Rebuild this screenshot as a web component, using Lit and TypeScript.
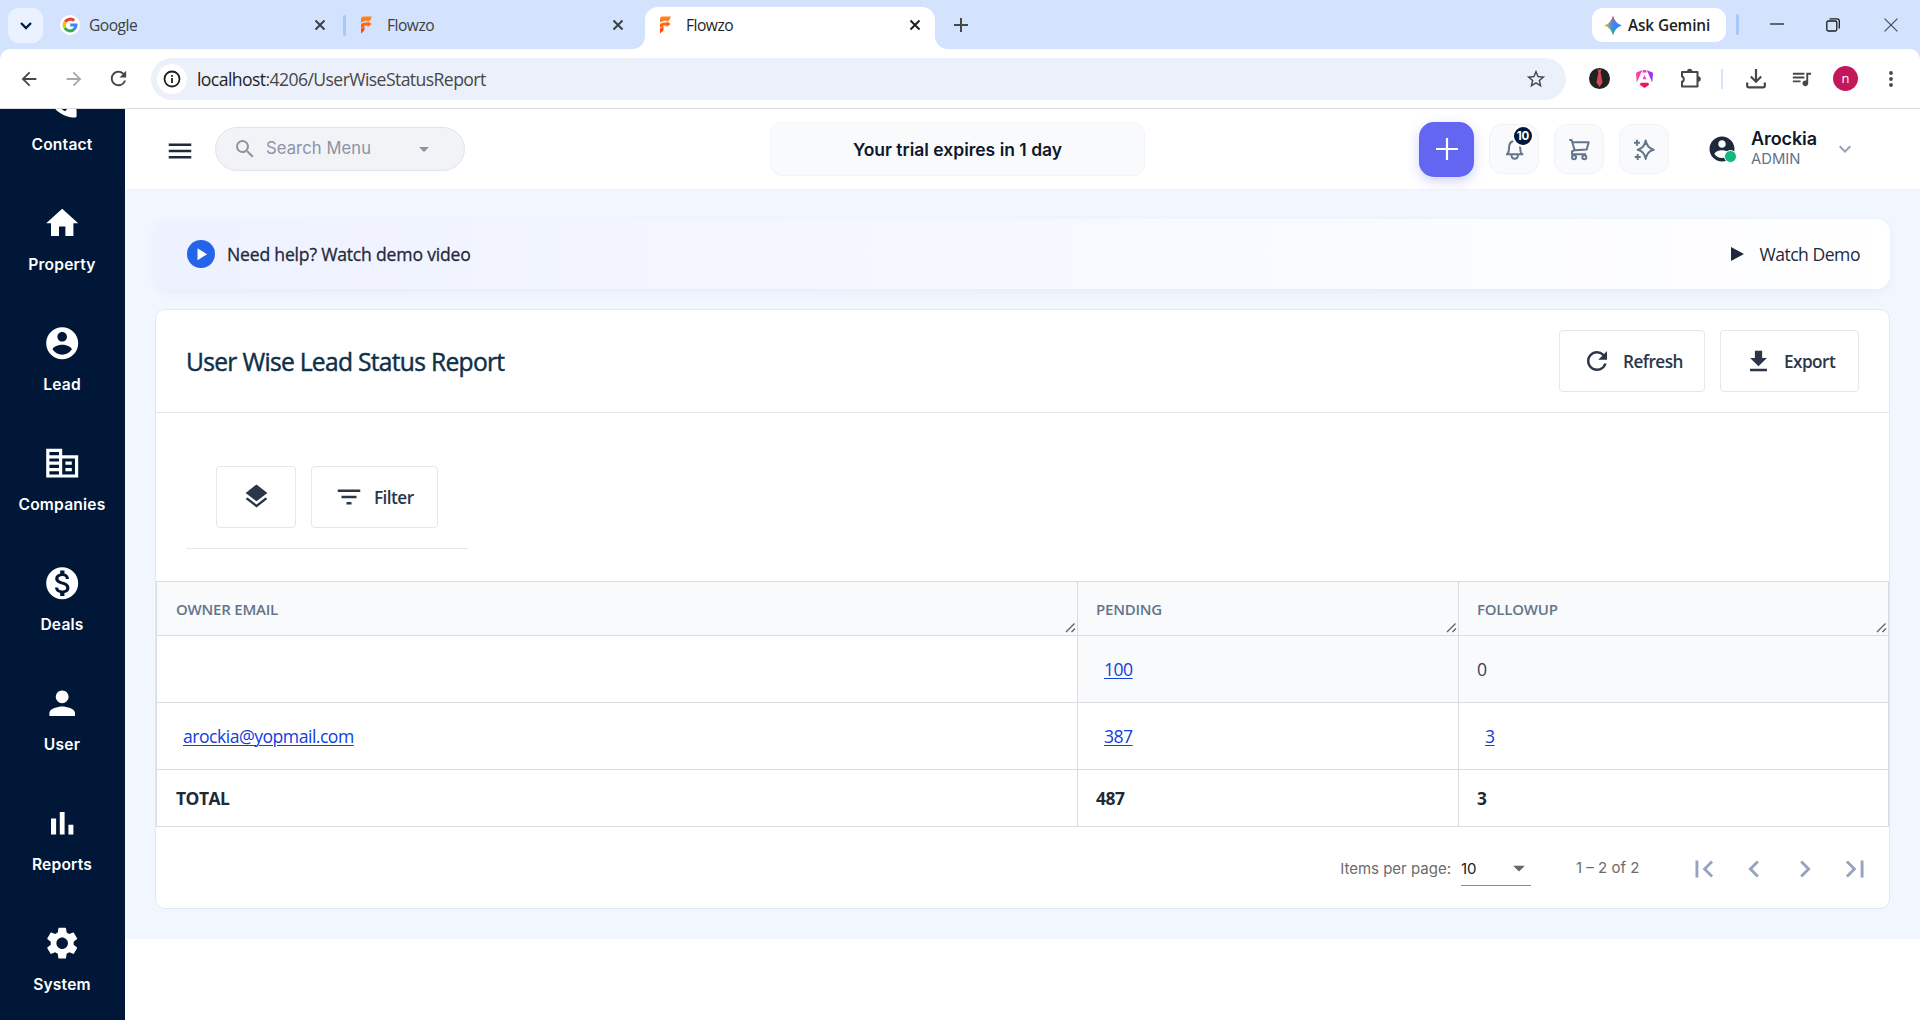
import { LitElement, html, svg, css, nothing } from "lit";
import { customElement, property } from "lit/decorators.js";
import { classMap } from "lit/directives/class-map.js";

const icons: Record<string, string> = {
  call: "M20.01 15.38c-1.23 0-2.42-.2-3.53-.56a.977.977 0 0 0-1.01.24l-1.57 1.97c-2.83-1.35-5.48-3.9-6.89-6.83l1.95-1.66c.27-.28.35-.67.24-1.02-.37-1.11-.56-2.3-.56-3.53 0-.54-.45-.99-.99-.99H4.19C3.65 3 3 3.24 3 3.99 3 13.28 10.73 21 20.01 21c.71 0 .99-.63.99-1.18v-3.45c0-.54-.45-.99-.99-.99z",
  home: "M10 20v-6h4v6h5v-8h3L12 3 2 12h3v8z",
  account: "M12 2C6.48 2 2 6.48 2 12s4.48 10 10 10 10-4.48 10-10S17.52 2 12 2zm0 3c1.66 0 3 1.34 3 3s-1.34 3-3 3-3-1.34-3-3 1.34-3 3-3zm0 14.2c-2.5 0-4.71-1.28-6-3.22.03-1.99 4-3.08 6-3.08 1.99 0 5.97 1.09 6 3.08-1.29 1.94-3.5 3.22-6 3.22z",
  business: "M12 7V3H2v18h20V7H12zm-2 12H4v-2h6v2zm0-4H4v-2h6v2zm0-4H4V9h6v2zm0-4H4V5h6v2zm10 12h-8V9h8v10zm-2-8h-4v2h4v-2zm0 4h-4v2h4v-2z",
  deals: "M12 2C6.48 2 2 6.48 2 12s4.48 10 10 10 10-4.48 10-10S17.52 2 12 2zm1.41 16.09V20h-2.67v-1.93c-1.71-.36-3.16-1.46-3.27-3.4h1.96c.1 1.05.82 1.87 2.65 1.87 1.96 0 2.4-.98 2.4-1.59 0-.83-.44-1.61-2.67-2.14-2.48-.6-4.18-1.62-4.18-3.67 0-1.72 1.39-2.84 3.11-3.21V4h2.67v1.95c1.86.45 2.79 1.86 2.85 3.39H14.3c-.05-1.11-.64-1.87-2.22-1.87-1.5 0-2.4.68-2.4 1.64 0 .84.65 1.39 2.67 1.91s4.18 1.39 4.18 3.91c-.01 1.83-1.38 2.83-3.12 3.16z",
  person: "M12 12c2.21 0 4-1.79 4-4s-1.79-4-4-4-4 1.79-4 4 1.79 4 4 4zm0 2c-2.67 0-8 1.34-8 4v2h16v-2c0-2.66-5.33-4-8-4z",
  chart: "M5 9h3.2v10H5zM10.5 5h3v14h-3zM15.9 13H19v6h-3.1z",
  gear: "M19.14 12.94c.04-.3.06-.61.06-.94 0-.32-.02-.64-.07-.94l2.03-1.58a.49.49 0 0 0 .12-.61l-1.92-3.32a.488.488 0 0 0-.59-.22l-2.39.96c-.5-.38-1.03-.7-1.62-.94l-.36-2.54a.484.484 0 0 0-.48-.41h-3.84c-.24 0-.43.17-.47.41l-.36 2.54c-.59.24-1.13.57-1.62.94l-2.39-.96c-.22-.08-.47 0-.59.22L2.74 8.87c-.12.21-.08.47.12.61l2.03 1.58c-.05.3-.09.63-.09.94s.02.64.07.94l-2.03 1.58a.49.49 0 0 0-.12.61l1.92 3.32c.12.22.37.29.59.22l2.39-.96c.5.38 1.03.7 1.62.94l.36 2.54c.05.24.24.41.48.41h3.84c.24 0 .44-.17.47-.41l.36-2.54c.59-.24 1.13-.56 1.62-.94l2.39.96c.22.08.47 0 .59-.22l1.92-3.32c.12-.22.07-.47-.12-.61l-2.01-1.58zM12 15.6c-1.98 0-3.6-1.62-3.6-3.6s1.62-3.6 3.6-3.6 3.6 1.62 3.6 3.6-1.62 3.6-3.6 3.6z",
  search: "M15.5 14h-.79l-.28-.27A6.471 6.471 0 0 0 16 9.5 6.5 6.5 0 1 0 9.5 16c1.61 0 3.09-.59 4.23-1.57l.27.28v.79l5 4.99L20.49 19l-4.99-5zm-6 0C7.01 14 5 11.99 5 9.5S7.01 5 9.5 5 14 7.01 14 9.5 11.99 14 9.5 14z",
  menu: "M3 18h18v-2H3v2zm0-5h18v-2H3v2zm0-7v2h18V6H3z",
  drop: "M7 10l5 5 5-5z",
  expand: "M16.59 8.59L12 13.17 7.41 8.59 6 10l6 6 6-6z",
  refresh: "M17.65 6.35A7.958 7.958 0 0 0 12 4c-4.42 0-7.99 3.58-7.99 8s3.57 8 7.99 8c3.73 0 6.84-2.55 7.73-6h-2.08A5.99 5.99 0 0 1 12 18c-3.31 0-6-2.69-6-6s2.69-6 6-6c1.66 0 3.14.69 4.22 1.78L13 11h7V4l-2.35 2.35z",
  download: "M19 9h-4V3H9v6H5l7 7 7-7zM5 18v2h14v-2H5z",
  layers: "M11.99 18.54l-7.37-5.73L3 14.07l9 7 9-7-1.63-1.27-7.38 5.74zM12 16l7.36-5.73L21 9l-9-7-9 7 1.63 1.27L12 16z",
  filter: "M10 18h4v-2h-4v2zM3 6v2h18V6H3zm3 7h12v-2H6v2z",
  first: "M18.41 16.59L13.82 12l4.59-4.59L17 6l-6 6 6 6zM6 6h2v12H6z",
  prev: "M15.41 7.41L14 6l-6 6 6 6 1.41-1.41L10.83 12z",
  next: "M10 6L8.59 7.41 13.17 12l-4.58 4.59L10 18l6-6z",
  last: "M5.59 7.41L10.18 12l-4.59 4.59L7 18l6-6-6-6zM16 6h2v12h-2z",
  back: "M20 11H7.83l5.59-5.59L12 4l-8 8 8 8 1.41-1.41L7.83 13H20v-2z",
  forward: "M12 4l-1.41 1.41L16.17 11H4v2h12.17l-5.58 5.59L12 20l8-8z",
  star: "M22 9.24l-7.19-.62L12 2 9.19 8.63 2 9.24l5.46 4.73L5.82 21 12 17.27 18.18 21l-1.63-7.03L22 9.24zM12 15.4l-3.76 2.27 1-4.28-3.32-2.88 4.38-.38L12 6.1l1.71 4.04 4.38.38-3.32 2.88 1 4.28L12 15.4z",
  queue: "M15 6H3v2h12V6zm0 4H3v2h12v-2zM3 16h8v-2H3v2zM17 6v8.18c-.31-.11-.65-.18-1-.18-1.66 0-3 1.34-3 3s1.34 3 3 3 3-1.34 3-3V8h3V6h-5z",
};

const icon = (name: string, size: number) => html`<svg
  class="icon"
  width=${size}
  height=${size}
  viewBox="0 0 24 24"
  fill="currentColor"
>
  <path d=${icons[name]} />
</svg>`;

const shared = css`
  * {
    box-sizing: border-box;
  }
  svg {
    display: block;
    flex: none;
  }
`;

const flowzoMark = html`<svg width="14" height="18" viewBox="0 0 14 18">
  <defs>
    <linearGradient id="fz" x1="0" y1="0" x2="0" y2="1">
      <stop offset="0" stop-color="#ff8a1c" />
      <stop offset="1" stop-color="#ff3d0a" />
    </linearGradient>
  </defs>
  <path
    fill="url(#fz)"
    d="M1 3Q1 .6 3.4 .6H12l-2 4.2H5.2L1 6.4zM1 7.8l3.6-1.4h3V4.900l4 3-4 3V9.600H4.500L3.800 11 1 11.600zM1 12.200l3.800-1.400-.5 3.600L1 17.400z"
  />
</svg>`;

@customElement("browser-tab")
class BrowserTab extends LitElement {
  @property() label = "";
  @property() kind = "flowzo";
  @property({ type: Boolean }) active = false;

  static styles = [
    shared,
    css`
      :host {
        display: block;
        height: 42px;
        position: relative;
      }
      .tab {
        display: flex;
        align-items: center;
        height: 42px;
        padding: 0 14px 6px 14px;
        font: 15.6px "Open Sans", sans-serif;
        letter-spacing: -0.5px;
        color: #3c4043;
      }
      .tab.google {
        padding-left: 15px;
      }
      .tab.active {
        background: #fff;
        border-radius: 13px 13px 0 0;
        color: #1f1f1f;
      }
      .tab.active::before,
      .tab.active::after {
        content: "";
        position: absolute;
        bottom: 0;
        width: 12px;
        height: 12px;
      }
      .tab.active::before {
        left: -12px;
        background: radial-gradient(circle at 0 0, transparent 11.5px, #fff 12px);
      }
      .tab.active::after {
        right: -12px;
        background: radial-gradient(circle at 100% 0, transparent 11.5px, #fff 12px);
      }
      .mark {
        width: 20px;
        margin-right: 7px;
        display: flex;
      }
      .google .mark {
        margin-right: 9px;
      }
      .label {
        flex: 1;
      }
    `,
  ];

  render() {
    const google = this.kind === "google";
    return html`<div class=${classMap({ tab: true, google, active: this.active })}>
      <span class="mark">
        ${google
          ? html`<svg width="20" height="20" viewBox="0 0 20 20">
              <circle cx="10" cy="10" r="10" fill="#fff" />
              <g fill="none" stroke-width="3">
                <path stroke="#ea4335" d="M5.100 6.900A6 6 0 0 1 14.200 5.700" />
                <path stroke="#fbbc05" d="M4.900 13A6 6 0 0 1 5.100 6.900" />
                <path stroke="#34a853" d="M14 14.400A6 6 0 0 1 4.900 13" />
                <path stroke="#4285f4" d="M10.200 10H16A6 6 0 0 1 13.900 14.500" />
              </g>
            </svg>`
          : flowzoMark}
      </span>
      <span class="label">${this.label}</span>
      <svg width="12" height="12" viewBox="0 0 12 12" stroke="currentColor" stroke-width="2">
        <path d="M1.500 1.500l9 9M10.500 1.500l-9 9" />
      </svg>
    </div>`;
  }
}

@customElement("browser-chrome")
class BrowserChrome extends LitElement {
  static styles = [
    shared,
    css`
      :host {
        display: block;
        height: 109px;
        background: #d3e3fd;
        font-family: "Open Sans", sans-serif;
        color: #474747;
      }
      .strip {
        display: flex;
        align-items: flex-start;
        height: 49px;
        padding: 7px 22px 0 8px;
      }
      .tabsearch {
        width: 35px;
        height: 35px;
        border-radius: 11px;
        background: #ebf2ff;
        margin: 1px 0 0;
        display: grid;
        place-items: center;
        color: #001d45;
      }
      browser-tab.t1 {
        width: 295px;
        margin: 0 3px 0 2px;
      }
      browser-tab.t2 {
        width: 292px;
        margin-right: 7px;
      }
      browser-tab.t3 {
        width: 290px;
      }
      .sep {
        width: 3px;
        height: 21px;
        border-radius: 2px;
        background: #a8c7fa;
        margin-top: 8px;
      }
      .newtab {
        margin: 11px 0 0 19px;
      }
      .gemini {
        margin-left: auto;
        margin-top: 1px;
        width: 134px;
        height: 34px;
        border-radius: 11px;
        background: #fff;
        display: flex;
        align-items: center;
        gap: 6px;
        padding-left: 12px;
        font-size: 15.4px;
        font-weight: 600;
        letter-spacing: -0.15px;
        color: #1f1f1f;
        white-space: nowrap;
      }
      .win {
        display: flex;
        align-items: center;
        height: 35px;
        margin-left: 10px;
      }
      .win .sep {
        margin: 0 31px 0 0;
      }
      .win .w2 {
        margin-left: 42px;
      }
      .win .w3 {
        margin-left: 44px;
      }
      .bar {
        height: 60px;
        background: #fff;
        border-radius: 10px 10px 0 0;
        border-bottom: 1px solid #dcdcdc;
        display: flex;
        align-items: center;
        padding: 0 16px 0 18px;
      }
      .fwd {
        color: #a9a9a9;
        margin: 0 22px 0 23px;
      }
      .omni {
        margin-left: 21px;
        width: 1415px;
        height: 42px;
        border-radius: 21px;
        background: #ebf0fa;
        display: flex;
        align-items: center;
        padding: 0 19px 0 6px;
      }
      .info {
        width: 30px;
        height: 30px;
        border-radius: 50%;
        background: #fff;
        display: grid;
        place-items: center;
        margin-right: 10px;
        color: #1f1f1f;
      }
      .url {
        flex: 1;
        padding-top: 1px;
        font-size: 17.6px;
        letter-spacing: -0.58px;
        color: #474747;
      }
      .host {
        color: #1f1f1f;
      }
      .ext {
        margin-left: 23px;
        display: flex;
        align-items: center;
        flex: 1;
      }
      .vsep {
        width: 2px;
        height: 20px;
        background: #d3e3fd;
        margin: 0 23px 0 20px;
      }
      .ang {
        margin: 0 27px 0 26px;
      }
      .queue {
        margin: 0 20px 0 24px;
      }
      .avatar {
        width: 25px;
        height: 25px;
        border-radius: 50%;
        background: #c2185b;
        color: #fff;
        font: 13px/24px "Open Sans", sans-serif;
        text-align: center;
      }
      .dots {
        margin-left: auto;
        margin-right: 11px;
      }
    `,
  ];

  render() {
    return html`
      <div class="strip">
        <div class="tabsearch">
          <svg width="14" height="10" viewBox="0 0 14 10" fill="none" stroke="currentColor" stroke-width="2.400">
            <path d="M2 2l5 5 5-5" />
          </svg>
        </div>
        <browser-tab class="t1" label="Google" kind="google"></browser-tab>
        <div class="sep"></div>
        <browser-tab class="t2" label="Flowzo"></browser-tab>
        <browser-tab class="t3" label="Flowzo" active></browser-tab>
        <svg class="newtab" width="14" height="14" viewBox="0 0 14 14" stroke="currentColor" stroke-width="2">
          <path d="M7 0v14M0 7h14" />
        </svg>
        <div class="gemini">
          <svg width="18" height="19" viewBox="0 0 18 19">
            <defs>
              <linearGradient id="gv" x1="0" y1="0" x2="0" y2="1">
                <stop offset="0.05" stop-color="#f94543" />
                <stop offset="0.38" stop-color="#f94543" stop-opacity="0" />
                <stop offset="0.62" stop-color="#28b446" stop-opacity="0" />
                <stop offset="0.9" stop-color="#28b446" />
              </linearGradient>
              <linearGradient id="gh" x1="0" y1="0" x2="1" y2="0">
                <stop offset="0.05" stop-color="#fbbc04" />
                <stop offset="0.45" stop-color="#3b8df5" />
                <stop offset="1" stop-color="#2f7bff" />
              </linearGradient>
            </defs>
            <path fill="url(#gh)" d="M9 0Q11 7.500 18 9.500 11 11.500 9 19 7 11.500 0 9.500 7 7.500 9 0z" />
            <path fill="url(#gv)" d="M9 0Q11 7.500 18 9.500 11 11.500 9 19 7 11.500 0 9.500 7 7.500 9 0z" />
          </svg>
          <span>Ask Gemini</span>
        </div>
        <div class="win">
          <div class="sep"></div>
          <svg width="14" height="14" viewBox="0 0 14 14" stroke="#5c6675" stroke-width="2"><path d="M0 6h14" /></svg>
          <svg class="w2" width="14" height="14" viewBox="0 0 14 14" fill="none" stroke="#1b1b1b" stroke-width="1.300">
            <rect x=".8" y="3" width="10" height="10" rx="1.500" />
            <path d="M3.500 .8h7.500a2.300 2.300 0 0 1 2.300 2.300v7.500" />
          </svg>
          <svg class="w3" width="14" height="14" viewBox="0 0 14 14" stroke="#444c59" stroke-width="1.200">
            <path d="M.6 .6l12.800 12.800M13.400 .6L.6 13.400" />
          </svg>
        </div>
      </div>
      <div class="bar">
        ${icon("back", 22)}
        <span class="fwd">${icon("forward", 22)}</span>
        ${icon("refresh", 23)}
        <div class="omni">
          <span class="info">
            <svg width="18" height="18" viewBox="0 0 18 18" fill="none" stroke="currentColor" stroke-width="1.800">
              <circle cx="9" cy="9" r="7.500" />
              <path d="M9 8v5M9 5v1.800" />
            </svg>
          </span>
          <span class="url"><span class="host">localhost</span>:4206/UserWiseStatusReport</span>
          ${icon("star", 22)}
        </div>
        <div class="ext">
          <svg width="21" height="21" viewBox="0 0 21 21">
            <circle cx="10.500" cy="10.500" r="10.500" fill="#222" />
            <path fill="#d2485a" d="M8.600 1.500h3.800l-.8 3 1.900 10-3 4.500-3-4.500 1.900-10z" />
          </svg>
          <svg class="ang" width="17" height="18" viewBox="0 0 17 18">
            <defs>
              <linearGradient id="ag" x1="0" y1="0" x2="17" y2="0" gradientUnits="userSpaceOnUse">
                <stop offset="0" stop-color="#ff3fa0" />
                <stop offset=".5" stop-color="#f23cc8" />
                <stop offset="1" stop-color="#8b2cff" />
              </linearGradient>
            </defs>
            <path fill="url(#ag)" d="M0 2.800L6.300 0 .800 12.500zM17 2.800L10.700 0l5.500 12.500z" />
            <path fill="url(#ag)" d="M8.500 5l1.900 4.200H6.600zM8.500 0l1.200 0L11 2.500H6L7.300 0z" />
            <path fill="#f5115a" d="M4.800 12.800h7.400l1 2L8.500 18l-4.700-3.200z" />
          </svg>
          <svg width="21" height="21" viewBox="0 0 21 21" fill="none" stroke="currentColor" stroke-width="2">
            <path stroke-linejoin="round" d="M2 4h15.500v14.500H2v-4.700a2.800 2.800 0 0 0 0-5.300z" />
            <path fill="currentColor" stroke="none" d="M7 3.500a2.700 2.700 0 0 1 5.400 0zM18 8.200a2.700 2.700 0 0 1 0 5.600z" />
          </svg>
          <div class="vsep"></div>
          <svg width="20" height="21" viewBox="0 0 20 21" fill="none" stroke="currentColor" stroke-width="2.200">
            <path d="M10 1v12.500M4.800 8.500L10 13.700l5.200-5.200M1.200 14.500v3.300q0 1.600 1.600 1.600h14.400q1.600 0 1.600-1.600v-3.300" />
          </svg>
          <span class="queue">${icon("queue", 23)}</span>
          <div class="avatar">n</div>
          <svg class="dots" width="4" height="16" viewBox="0 0 4 16" fill="currentColor">
            <circle cx="2" cy="2" r="1.900" />
            <circle cx="2" cy="8" r="1.900" />
            <circle cx="2" cy="14" r="1.900" />
          </svg>
        </div>
      </div>
    `;
  }
}

const navItems = [
  { label: "Contact", glyph: "call" },
  { label: "Property", glyph: "home" },
  { label: "Lead", glyph: "account" },
  { label: "Companies", glyph: "business" },
  { label: "Deals", glyph: "deals" },
  { label: "User", glyph: "person" },
  { label: "Reports", glyph: "chart" },
  { label: "System", glyph: "gear" },
];

@customElement("side-nav")
class SideNav extends LitElement {
  static styles = [
    shared,
    css`
      :host {
        display: flex;
        flex-direction: column;
        justify-content: flex-end;
        width: 125px;
        flex: none;
        background: #001737;
        overflow: hidden;
      }
      .item {
        height: 120px;
        flex: none;
        display: flex;
        flex-direction: column;
        align-items: center;
        padding-top: 19.5px;
        gap: 13px;
        color: #fff;
        font: 600 15.6px/20px Inter, sans-serif;
        letter-spacing: 0.2px;
      }
      .item span {
        margin-right: 1px;
      }
      .item:last-child {
        height: 116px;
      }
    `,
  ];

  render() {
    return navItems.map((n) => html`<div class="item">${icon(n.glyph, 38.4)}<span>${n.label}</span></div>`);
  }
}

@customElement("app-header")
class AppHeader extends LitElement {
  static styles = [
    shared,
    css`
      :host {
        display: flex;
        align-items: center;
        height: 81px;
        flex: none;
        background: #fff;
        border-bottom: 1px solid #f1f4f9;
        padding: 0 60px 0 40px;
        font-family: Inter, sans-serif;
      }
      .burger {
        color: #1e293b;
        margin-top: 3px;
      }
      .search {
        width: 250px;
        height: 44px;
        margin-left: 20px;
        border: 1px solid #e1e4ea;
        border-radius: 22px;
        background: #f1f3f7;
        display: flex;
        align-items: center;
        padding: 0 28px 0 17px;
        font-size: 16.6px;
        letter-spacing: 0.1px;
        color: #8a94a6;
      }
      .search span {
        flex: 1;
        margin: -2px 0 0 9px;
      }
      .trial {
        margin-left: 305px;
        width: 375px;
        height: 54px;
        border: 1px solid #f1f4f8;
        border-radius: 12px;
        background: #f8fafc;
        font-size: 17.5px;
        font-weight: 600;
        color: #0f172a;
        display: grid;
        place-items: center;
      }
      .add {
        margin-left: 274px;
        width: 55px;
        height: 55px;
        border-radius: 15px;
        background: #6366f1;
        box-shadow: 0 4px 12px rgba(99, 102, 241, 0.3);
        display: grid;
        place-items: center;
      }
      .tool {
        margin-left: 15px;
        width: 50px;
        height: 50px;
        border: 1px solid #eff3f8;
        border-radius: 13px;
        background: #f8fafc;
        display: grid;
        place-items: center;
        position: relative;
        color: #64748b;
      }
      .badge {
        position: absolute;
        right: 4px;
        top: 0;
        width: 22px;
        height: 22px;
        border: 2px solid #fff;
        border-radius: 50%;
        background: #001737;
        color: #fff;
        font: 700 11.5px/18px Inter, sans-serif;
        text-align: center;
      }
      .user {
        position: relative;
        margin-left: 38px;
        color: #1e293b;
      }
      .dot {
        position: absolute;
        right: 0;
        bottom: 1px;
        width: 13px;
        height: 13px;
        border: 1px solid #fff;
        border-radius: 50%;
        background: #10b981;
      }
      .who {
        margin-left: 14px;
        width: 82px;
        line-height: 20px;
        padding-bottom: 1px;
      }
      .name {
        font-size: 18px;
        font-weight: 600;
        color: #0f172a;
        letter-spacing: -0.1px;
      }
      .role {
        font-size: 14.8px;
        color: #64748b;
      }
      .chev {
        color: #94a3b8;
      }
    `,
  ];

  render() {
    return html`
      <span class="burger">${icon("menu", 30)}</span>
      <div class="search">${icon("search", 24)}<span>Search Menu</span>${icon("drop", 24)}</div>
      <div class="trial">Your trial expires in 1 day</div>
      <div class="add">
        <svg width="22" height="22" viewBox="0 0 22 22" stroke="#fff" stroke-width="2.200"><path d="M11 0v22M0 11h22" /></svg>
      </div>
      ${this.tool(
        svg`<path d="M4 17.300h17.300M5.500 17c1.700-1.700 1.400-4.300 1.500-6.500C7.200 6.500 9.500 4 12.700 4s5.300 2.500 5.500 6.500c.1 2.200-.1 4.800 1.600 6.500M9.500 18c0 2.200 1.400 3.800 3.200 3.800s3.200-1.600 3.200-3.800"/>`,
        "10",
      )}
      ${this.tool(
        svg`<path d="M2.300 3h2.300l3 10-2.600 1.300v3H19M5.300 5.300h16.400l-2 7.300-12 .7"/><circle cx="7" cy="20.200" r="2"/><circle cx="17.300" cy="20.200" r="2"/>`,
      )}
      ${this.tool(
        svg`<path d="M13.700 3.500q1.300 7.600 8 9.200-6.700 1.600-8 9.200-1.300-7.600-8-9.200 6.700-1.600 8-9.200zM5 2.700v6M2 5.700h6M5.700 17v6M2.700 20h6"/>`,
      )}
      <div class="user">${icon("account", 30)}<span class="dot"></span></div>
      <div class="who">
        <div class="name">Arockia</div>
        <div class="role">ADMIN</div>
      </div>
      <span class="chev">${icon("expand", 24)}</span>
    `;
  }

  private tool(glyph: unknown, badge = "") {
    return html`<div class="tool">
      <svg width="24" height="24" viewBox="0 0 24 24" fill="none" stroke="currentColor" stroke-width="2" stroke-linejoin="round">
        ${glyph}
      </svg>
      ${badge ? html`<span class="badge">${badge}</span>` : nothing}
    </div>`;
  }
}

@customElement("demo-banner")
class DemoBanner extends LitElement {
  static styles = [
    shared,
    css`
      :host {
        display: flex;
        align-items: center;
        height: 70px;
        padding: 0 30px 0 32px;
        border-radius: 14px;
        background: linear-gradient(90deg, #eef2ff, #fff);
        box-shadow: 0 3px 10px rgba(30, 60, 90, 0.06);
        font: 17.6px "Open Sans", sans-serif;
        color: #1e293b;
      }
      .help {
        flex: 1;
        margin-left: 12px;
        letter-spacing: -0.2px;
        -webkit-text-stroke: 0.3px currentColor;
      }
      .watch {
        margin-left: 15px;
        letter-spacing: -0.5px;
      }
    `,
  ];

  render() {
    return html`
      <svg width="28" height="28" viewBox="0 0 28 28">
        <circle cx="14" cy="14" r="14" fill="#2563eb" />
        <path fill="#fff" d="M10.500 8.300v12l9.500-6z" />
      </svg>
      <span class="help">Need help? Watch demo video</span>
      <svg width="13" height="14" viewBox="0 0 13 14"><path fill="#1e293b" d="M0 0v14l13-7z" /></svg>
      <span class="watch">Watch Demo</span>
    `;
  }
}

interface Cell {
  text: string;
  link?: boolean;
}

@customElement("report-card")
class ReportCard extends LitElement {
  private columns = ["OWNER EMAIL", "PENDING", "FOLLOWUP"];
  private rows: Cell[][] = [
    [{ text: "" }, { text: "100", link: true }, { text: "0" }],
    [
      { text: "arockia@yopmail.com", link: true },
      { text: "387", link: true },
      { text: "3", link: true },
    ],
  ];
  private totals = ["TOTAL", "487", "3"];

  static styles = [
    shared,
    css`
      :host {
        display: block;
        height: 600px;
        border: 1px solid #e2e8f0;
        border-radius: 10px;
        background: #fff;
        font-family: "Open Sans", sans-serif;
        color: #1e293b;
      }
      .head {
        display: flex;
        align-items: center;
        gap: 15px;
        height: 103px;
        padding: 0 30px;
        border-bottom: 1px solid #e2e8f0;
      }
      h1 {
        flex: 1;
        margin: 0;
        font-size: 24.6px;
        font-weight: 400;
        letter-spacing: -0.7px;
        color: #0f3049;
        -webkit-text-stroke: 0.45px currentColor;
      }
      .btn {
        height: 62px;
        border: 1px solid #e2e8f0;
        border-radius: 4px;
        display: flex;
        align-items: center;
        font-size: 17.2px;
        font-weight: 600;
        letter-spacing: -0.55px;
        color: #2b3648;
      }
      .refresh {
        width: 146px;
        padding-left: 22px;
        gap: 11px;
      }
      .export {
        width: 139px;
        padding-left: 23px;
        gap: 11px;
      }
      .tools {
        width: 282px;
        height: 136px;
        margin-left: 30px;
        padding: 53px 0 0 30px;
        border-bottom: 1px solid #e2e8f0;
        display: flex;
        gap: 15px;
      }
      .layers {
        width: 80px;
        padding-bottom: 2px;
        justify-content: center;
      }
      .filter {
        width: 127px;
        padding-left: 22px;
        gap: 10px;
      }
      .table {
        margin-top: 32px;
        border: solid #dadce0;
        border-width: 1px 1px 0 1px;
      }
      .row {
        display: grid;
        grid-template-columns: 920px 381px 1fr;
        height: 67px;
        border-bottom: 1px solid #dadce0;
        font-size: 17.6px;
        letter-spacing: -0.5px;
        color: #374151;
      }
      .cell {
        display: flex;
        align-items: center;
        padding-left: 19px;
        position: relative;
      }
      .cell + .cell {
        border-left: 1px solid #dadce0;
        padding-left: 18px;
      }
      .cell.shade {
        background: #f8fafc;
      }
      .cell.link,
      .cell + .cell.link {
        padding-left: 26px;
      }
      a {
        color: #1140d9;
        text-decoration: underline;
        text-decoration-thickness: 1px;
        text-underline-offset: 2px;
      }
      .columns {
        height: 54px;
        background: #f8fafc;
        font-size: 15px;
        font-weight: 600;
        letter-spacing: -0.22px;
        color: #64748b;
      }
      .totals {
        height: 57px;
        font-size: 17.4px;
        font-weight: 700;
        color: #1f2937;
      }
      .grip {
        position: absolute;
        right: 1px;
        bottom: 2px;
      }
      .pager {
        height: 83px;
        display: flex;
        align-items: center;
        justify-content: flex-end;
        padding-right: 17px;
        font: 15px Inter, sans-serif;
        color: #6b6b6b;
      }
      .size {
        width: 70px;
        height: 34px;
        margin: 0 45px 0 10px;
        border-bottom: 1px solid #8a8a8a;
        display: flex;
        align-items: center;
        justify-content: space-between;
        color: #212121;
      }
      .size svg {
        color: #666;
        margin-right: -2px;
      }
      .range {
        width: 94px;
        padding-bottom: 3px;
      }
      .step {
        width: 34px;
        margin-left: 16.5px;
        color: #94a3c0;
      }
    `,
  ];

  private cell(c: Cell, shaded: boolean) {
    return html`<div class=${classMap({ cell: true, link: !!c.link, shade: shaded })}>
      ${c.link ? html`<a>${c.text}</a>` : c.text}
    </div>`;
  }

  render() {
    return html`
      <div class="head">
        <h1>User Wise Lead Status Report</h1>
        <div class="btn refresh">${icon("refresh", 30)}<span>Refresh</span></div>
        <div class="btn export">${icon("download", 29)}<span>Export</span></div>
      </div>
      <div class="tools">
        <div class="btn layers">${icon("layers", 29)}</div>
        <div class="btn filter">${icon("filter", 30)}<span>Filter</span></div>
      </div>
      <div class="table">
        <div class="row columns">
          ${this.columns.map(
            (c) => html`<div class="cell">
              ${c}
              <svg class="grip" width="11" height="11" viewBox="0 0 11 11" stroke="#5f6368" stroke-width="1.400">
                <path d="M1 10L9.500 1.500M6.500 10l3.500-3.500" />
              </svg>
            </div>`,
          )}
        </div>
        ${this.rows.map(
          (r, i) => html`<div class="row">${r.map((c, j) => this.cell(c, i === 0 && j > 0))}</div>`,
        )}
        <div class="row totals">${this.totals.map((t) => html`<div class="cell">${t}</div>`)}</div>
      </div>
      <div class="pager">
        <span>Items per page:</span>
        <div class="size"><span>10</span>${icon("drop", 28)}</div>
        <span class="range">1 – 2 of 2</span>
        ${["first", "prev", "next", "last"].map((n) => html`<span class="step">${icon(n, 34)}</span>`)}
      </div>
    `;
  }
}

@customElement("app-root")
class AppRoot extends LitElement {
  static styles = [
    shared,
    css`
      :host {
        display: flex;
        flex-direction: column;
        width: 1920px;
        height: 1020px;
        overflow: hidden;
        background: #fff;
      }
      browser-chrome {
        flex: none;
      }
      .page {
        flex: 1;
        display: flex;
        min-height: 0;
      }
      .main {
        flex: 1;
        display: flex;
        flex-direction: column;
      }
      .content {
        height: 749px;
        background: #f2f7ff;
        padding: 29px 30px 0;
        display: flex;
        flex-direction: column;
        gap: 20px;
      }
      demo-banner,
      report-card {
        flex: none;
      }
    `,
  ];

  render() {
    return html`
      <browser-chrome></browser-chrome>
      <div class="page">
        <side-nav></side-nav>
        <div class="main">
          <app-header></app-header>
          <div class="content">
            <demo-banner></demo-banner>
            <report-card></report-card>
          </div>
        </div>
      </div>
    `;
  }
}
